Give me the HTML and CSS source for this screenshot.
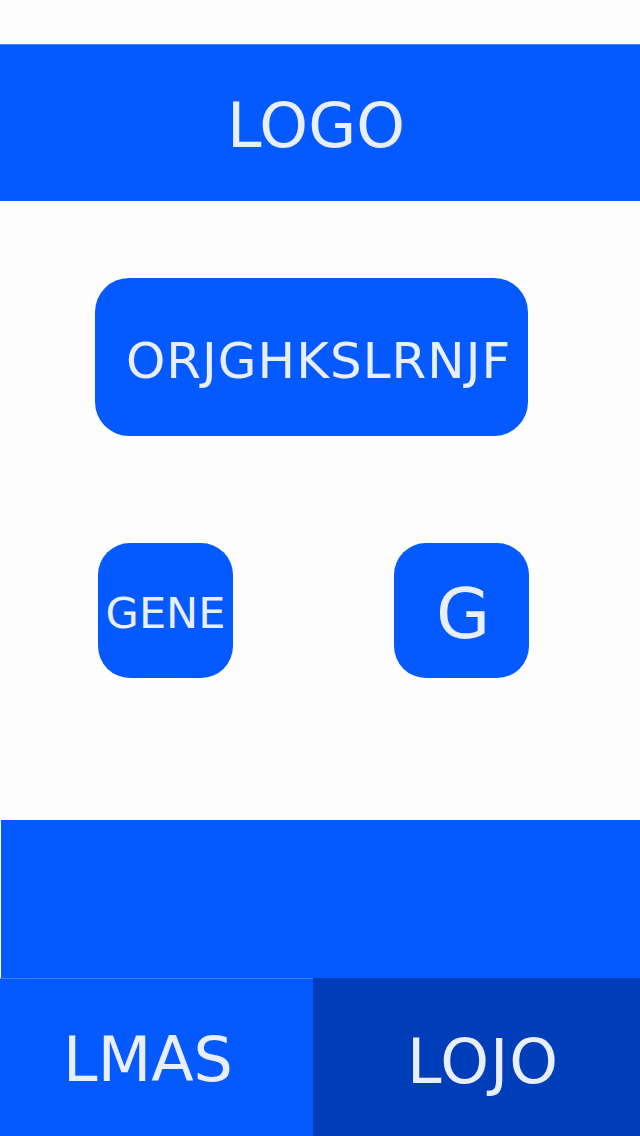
FILE: index.html
```html
<!DOCTYPE html>
<html>
<head>
<meta charset="utf-8">
<link rel="stylesheet" href="styles.css">
</head>
<body>
<div class="page">
  <div class="top-space"></div>
  <header class="header"><span class="logo">LOGO</span></header>
  <main class="main">
    <div class="big-btn">ORJGHKSLRNJF</div>
    <div class="small-row">
      <div class="sq-btn gene">GENE</div>
      <div class="sq-btn g">G</div>
    </div>
  </main>
  <div class="band"></div>
  <div class="tabs">
    <div class="tab tab-left">LMAS</div>
    <div class="tab tab-right">LOJO</div>
  </div>
</div>
</body>
</html>
```
FILE: styles.css
```css
html, body {
  margin: 0;
  padding: 0;
  background: #fdfdfe;
}
.page {
  width: 640px;
  height: 1136px;
  display: flex;
  flex-direction: column;
  font-family: "DejaVu Sans", Verdana, sans-serif;
  color: #e8eefb;
  overflow: hidden;
}
.top-space {
  height: 44px;
  flex: none;
}
.header {
  height: 157px;
  flex: none;
  box-sizing: border-box;
  background: #0459ff;
  border-top: 1px solid #3f80ff;
  display: flex;
  align-items: center;
  justify-content: center;
  padding-top: 5px;
  padding-right: 8px;
}
.logo {
  font-size: 62px;
  line-height: 1;
}
.main {
  height: 619px;
  flex: none;
  display: flex;
  flex-direction: column;
  padding-top: 77px;
  box-sizing: border-box;
}
.big-btn {
  margin-left: 95px;
  width: 433px;
  height: 158px;
  box-sizing: border-box;
  background: #0459ff;
  border-radius: 34px;
  display: flex;
  align-items: center;
  padding-left: 31px;
  padding-top: 8px;
  font-size: 50px;
  letter-spacing: 1px;
  line-height: 1;
  white-space: nowrap;
}
.small-row {
  display: flex;
  margin-top: 107px;
  margin-left: 98px;
  gap: 161px;
}
.sq-btn {
  width: 135px;
  height: 135px;
  box-sizing: border-box;
  background: #0459ff;
  border-radius: 32px;
  display: flex;
  align-items: center;
  justify-content: center;
  line-height: 1;
  padding-top: 6px;
}
.gene {
  font-size: 43px;
}
.g {
  font-size: 70px;
  padding-left: 3px;
}
.band {
  height: 158px;
  flex: none;
  margin-left: 1px;
  background: #0459ff;
}
.tabs {
  height: 158px;
  flex: none;
  display: flex;
}
.tab {
  display: flex;
  align-items: center;
  justify-content: center;
  font-size: 62px;
  line-height: 1;
  box-sizing: border-box;
}
.tab-left {
  width: 313px;
  background: #0459ff;
  border-top: 1px solid #3f80ff;
  padding-right: 17px;
  padding-top: 5px;
}
.tab-right {
  flex: 1;
  background: #003db8;
  padding-left: 13px;
  padding-top: 10px;
  letter-spacing: 1px;
}
```
